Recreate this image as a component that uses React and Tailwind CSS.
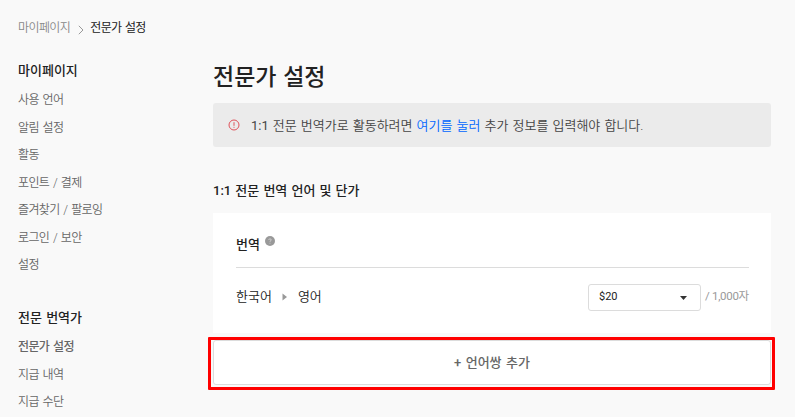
import React, { useState } from 'react';

const accountMenu = ['사용 언어', '알림 설정', '활동', '포인트 / 결제', '즐겨찾기 / 팔로잉', '로그인 / 보안', '설정'];
const translatorMenu = ['전문가 설정', '지급 내역', '지급 수단'];

const MenuGroup = ({ title, items, active }) => (
  <div>
    <h2 className="mb-px h-[30px] leading-[29px] text-[13px] font-medium text-[#222] [word-spacing:1px]">{title}</h2>
    <ul>
      {items.map((item) => (
        <li
          key={item}
          className={`h-[27.5px] leading-[27px] text-[12px] tracking-[-0.65px] [word-spacing:1.5px] whitespace-nowrap cursor-pointer ${
            item === active ? 'font-medium text-[#666]' : 'font-[350] text-[#666]'
          }`}
        >
          {item}
        </li>
      ))}
    </ul>
  </div>
);

const App = () => {
  const [price] = useState('$20');

  return (
    <div className="h-[417px] overflow-hidden bg-[#f9f9f9] font-['Roboto','Noto_Sans_CJK_KR',sans-serif] text-[#222]">
      {/* Breadcrumb */}
      <nav className="flex h-14 items-center pl-[18px] text-[12px] tracking-[-0.6px] [word-spacing:1px]">
        <span className="font-[350] text-[#888]">마이페이지</span>
        <svg className="ml-2 mt-[3px] mr-[6px]" width="6" height="10" viewBox="0 0 6 10" fill="none" stroke="#999">
          <path d="M0.8 0.8L5 5L0.8 9.2" />
        </svg>
        <span>전문가 설정</span>
      </nav>

      <div className="flex pl-[18px]">
        {/* Sidebar */}
        <aside className="flex w-[195px] shrink-0 flex-col gap-[23.5px]">
          <MenuGroup title="마이페이지" items={accountMenu} />
          <MenuGroup title="전문 번역가" items={translatorMenu} active="전문가 설정" />
        </aside>

        {/* Main content */}
        <main className="w-[558px] shrink-0 pt-1">
          <h1 className="h-[43px] leading-[35px] text-[23px] font-medium [word-spacing:1px]">전문가 설정</h1>

          <div className="flex h-11 items-center rounded-[3px] bg-[#ebebeb] pl-[15px] text-[13px] text-[#444]">
            <svg className="mr-[11px]" width="12" height="12" viewBox="0 0 12 12" fill="none" stroke="#e0525a">
              <circle cx="6" cy="6" r="5" />
              <path d="M6 3.2V6.8M6 7.8V8.8" />
            </svg>
            <p className="whitespace-pre pt-px font-[350] [word-spacing:0.9px]">
              <span className="font-normal">1:1</span> 전문 번역가로 활동하려면 <a className="text-[#0066ff]">여기를 눌러</a> 추가 정보를 입력해야 합니다.
            </p>
          </div>

          <h2 className="mt-[34px] h-8 leading-5 text-[13px] font-medium [word-spacing:0.9px]">
            1:1 전문 번역 언어 및 단가
          </h2>

          <section className="h-[120px] bg-white pl-[23px] pr-[22px]">
            <div className="flex h-[55px] items-center border-b border-[#dcdcdc] pt-[10px] text-[13px] font-medium">
              번역
              <svg className="mb-[8px] ml-[5px]" width="10" height="10" viewBox="0 0 10 10">
                <circle cx="5" cy="5" r="5" fill="#999" />
                <path d="M3.8 4C3.8 2.4 6.3 2.5 6.2 4C6.1 4.7 5 4.8 5 5.8M5 6.8V7.6" fill="none" stroke="#ddd" strokeWidth="0.8" />
              </svg>
            </div>
            <div className="flex h-[58px] items-center text-[13px]">
              <span className="font-[350]">한국어</span>
              <svg className="ml-[10px] mr-[11px]" width="5" height="8" viewBox="0 0 5 8" fill="#999">
                <path d="M0.5 0.5L5 4L0.5 7.5Z" />
              </svg>
              <span className="font-[350]">영어</span>
              <button className="ml-auto flex h-[27px] w-[113px] items-center justify-between rounded-[3px] border border-[#dcdcdc] pl-2.5 pr-[13px] text-[11px]">
                {price}
                <svg className="mt-0.5" width="7" height="4" viewBox="0 0 7 4" fill="#333">
                  <path d="M0 0H7L3.5 4Z" />
                </svg>
              </button>
              <span className="ml-1 w-11 whitespace-nowrap text-[11.5px] tracking-[-0.3px] text-[#999]">/ 1,000자</span>
            </div>
          </section>

          {/* Highlighted add button */}
          <div className="-ml-[5px] mt-1 h-[53px] w-[567px] rounded-[1px] border-[3px] border-[#ff0000] bg-[#f9f9f9] pl-[2px] pr-px">
            <button className="block h-[45px] w-full rounded-[3px] border border-[#dcdcdc] bg-white text-[13px] font-medium text-[#666] [word-spacing:1.2px]">
              + 언어쌍 추가
            </button>
          </div>
        </main>
      </div>
    </div>
  );
};

export default App;
